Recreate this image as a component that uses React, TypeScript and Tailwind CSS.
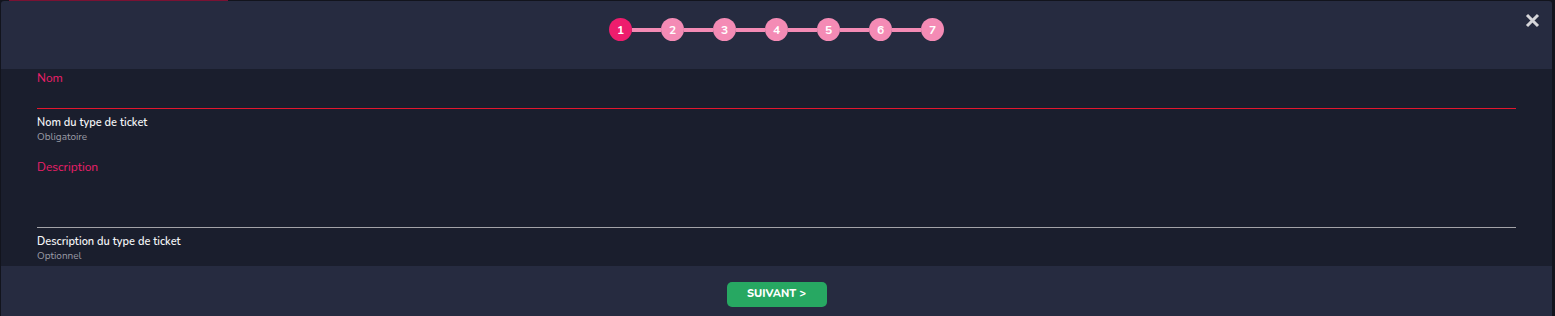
import React from 'react';

const steps = [1, 2, 3, 4, 5, 6, 7];

const Stepper: React.FC<{ current: number }> = ({ current }) => (
  <div className="flex items-center">
    {steps.map((step, i) => (
      <React.Fragment key={step}>
        {i > 0 && <div className="h-[4px] w-[29px] bg-[#f48bb5]" />}
        <div
          className={`flex h-[23px] w-[23px] items-center justify-center rounded-full text-[12px] font-bold text-white ${
            step === current ? 'bg-[#ee1d6d]' : 'bg-[#f48bb5]'
          }`}
        >
          {step}
        </div>
      </React.Fragment>
    ))}
  </div>
);

const App: React.FC = () => {
  return (
    <div className="h-[316px] w-full overflow-hidden bg-[#12141d] font-['Nunito','Lato',sans-serif]">
      {/* page behind the modal */}
      <div className="h-[1px]">
        <div className="ml-[9px] h-[1px] w-[219px] bg-[#7a1233]" />
      </div>

      {/* Modal */}
      <div className="relative ml-[1px] mr-[3px] flex h-[315px] flex-col overflow-hidden rounded-t-[3px] bg-[#262b40]">
        <button className="absolute right-[12px] top-[12px] text-[#d6d6da]">
          <svg width="15" height="15" viewBox="0 0 15 15" fill="none">
            <path d="M2 2L13 13M13 2L2 13" stroke="currentColor" strokeWidth="3" />
          </svg>
        </button>

        {/* Header */}
        <div className="flex h-[68px] shrink-0 items-start justify-center pt-[17px]">
          <Stepper current={1} />
        </div>

        {/* Body */}
        <div className="h-[197px] shrink-0 bg-[#1a1e2d] px-[36px]">
          <div className="h-[40px] border-b border-[#e3172e] pt-[1px]">
            <label className="block text-[12px] leading-[16px] text-[#ed1f6a]">Nom</label>
          </div>
          <div className="mb-[16px] pt-[6px]">
            <p className="text-[11px] font-semibold leading-[16px] text-[#f3f4f6]">Nom du type de ticket</p>
            <p className="text-[10px] leading-[12px] text-[#9a9ca6]">Obligatoire</p>
          </div>

          <div className="h-[69px] border-b border-[#a3a3a8]">
            <label className="block text-[12px] leading-[16px] text-[#ed1f6a]">Description</label>
          </div>
          <div className="pt-[6px]">
            <p className="text-[11px] font-semibold leading-[16px] text-[#f3f4f6]">Description du type de ticket</p>
            <p className="text-[10px] leading-[12px] text-[#9a9ca6]">Optionnel</p>
          </div>
        </div>

        {/* Footer */}
        <div className="flex flex-1 justify-center pt-[16px]">
          <button className="h-[25px] w-[100px] rounded-[5px] bg-[#27a862] text-[11px] font-extrabold text-white">
            SUIVANT &gt;
          </button>
        </div>
      </div>
    </div>
  );
};

export default App;
